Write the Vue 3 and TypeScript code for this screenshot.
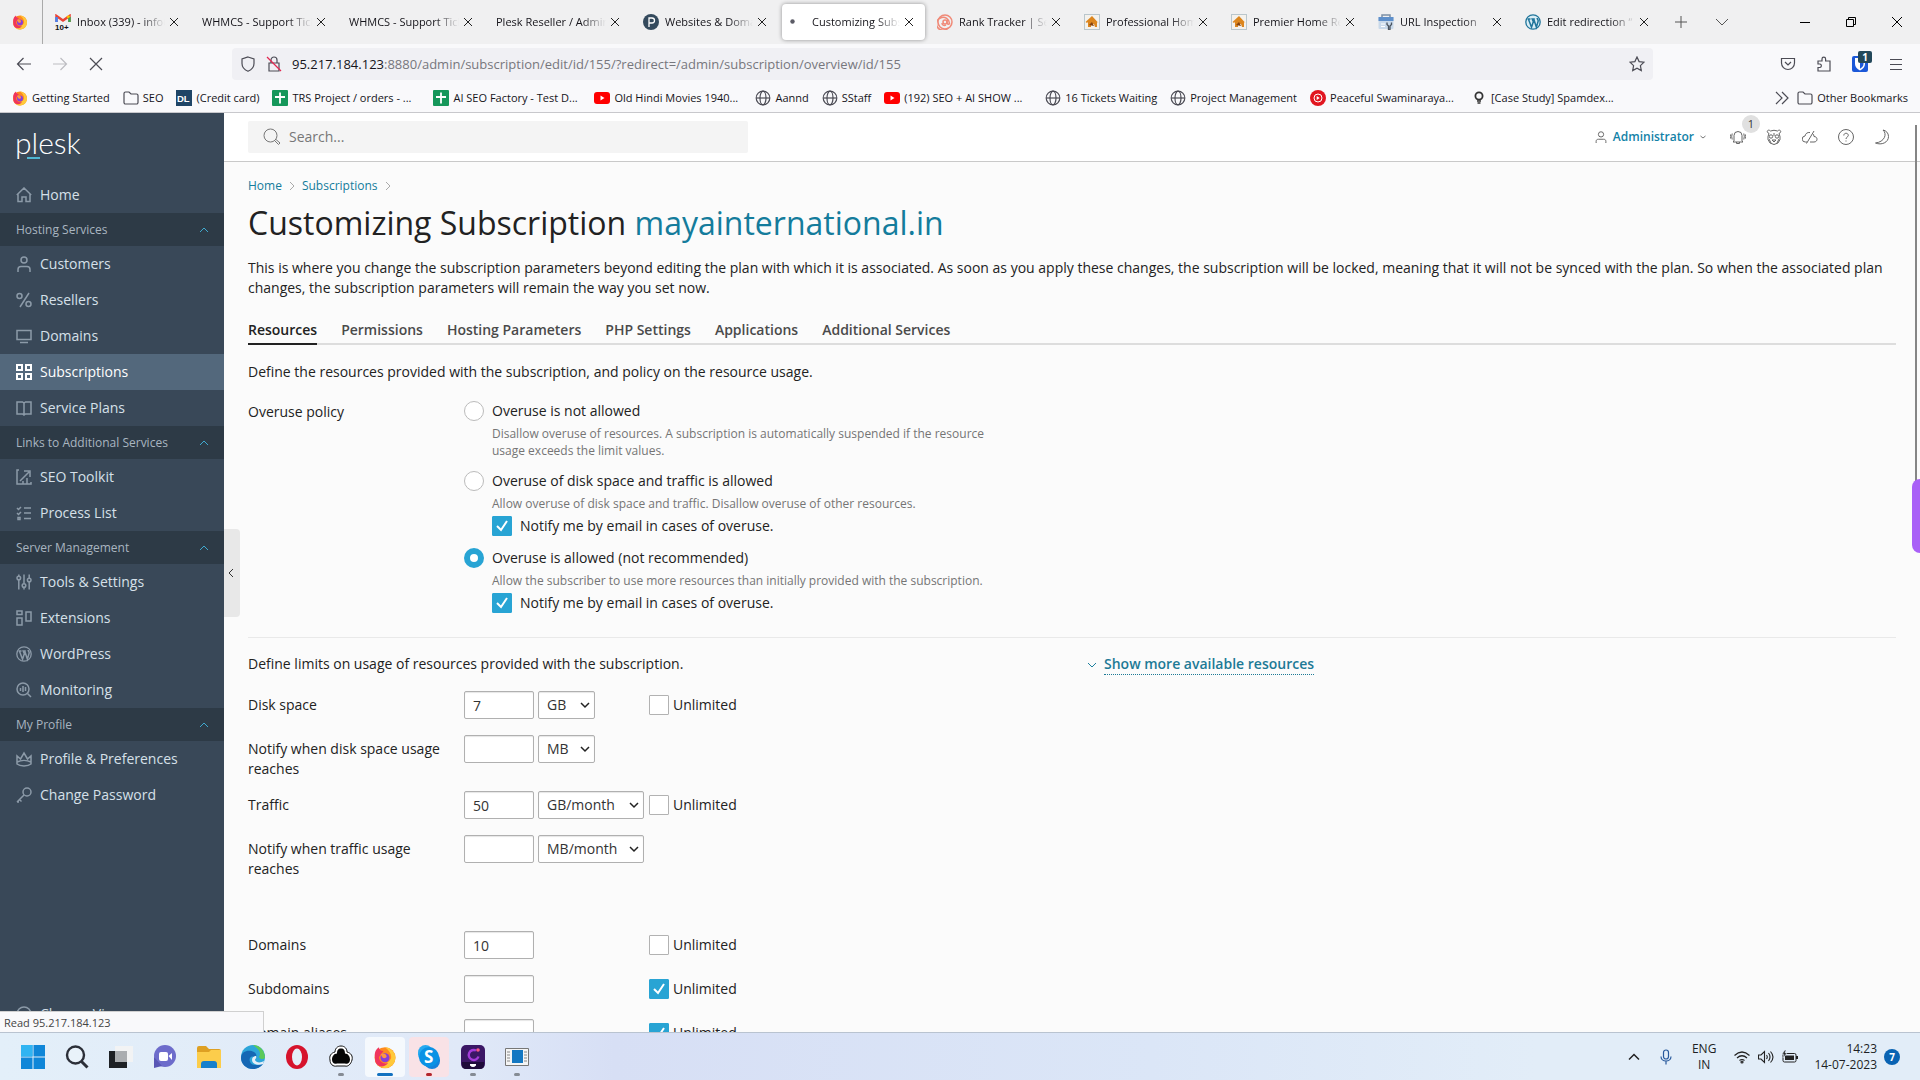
<script setup lang="ts">
import { ref } from 'vue'

interface BrowserTab { title: string; icon?: string; active?: boolean }
interface Bookmark { title: string; icon: string }
interface NavItem { label: string; icon: string; active?: boolean }
interface NavGroup { title?: string; items: NavItem[] }
interface Limit {
  id: string
  label: string
  value: string
  units?: string[]
  wide?: boolean
  unlimited?: boolean
  gapAfter?: boolean
}

const firefox = '<circle cx="8" cy="8.5" r="7" fill="#ff8a1e"/><path d="M8 1.5c3 0 7 3 7 7a7 7 0 0 1-13.500 2.500C5 14 10 13 12 9c.5-3-1-5-4-7.500z" fill="#ffc93a"/><path d="M1.200 7C1 4 3 2 4 1.500 4 3 5 4 7 4L4 8c0 3 3 5 6 4-2 3-7 3.500-8.500-1z" fill="#f0355c"/><circle cx="8" cy="8.500" r="3" fill="#8a3fd8"/><path d="M5 6c2-1 4 0 4 1.500S7 9 6.500 8.500z" fill="#ff9640"/>'
const globe = '<g fill="none" stroke="#4c4c55" stroke-width="1.200"><circle cx="8" cy="8" r="6.800"/><ellipse cx="8" cy="8" rx="3" ry="6.800"/><path d="M1.500 8h13"/></g>'
const folder = '<path d="M1 3.500a1.500 1.500 0 0 1 1.500-1.500h3.500l2 2h5.500A1.500 1.500 0 0 1 15 5.500v7a1.500 1.500 0 0 1-1.500 1.500h-11A1.500 1.500 0 0 1 1 12.500z" fill="none" stroke="#4c4c55" stroke-width="1.200"/>'
const sheet = '<rect width="16" height="16" rx="1" fill="#15975a"/><path d="M8 2.500v11M3 7h10" stroke="#fff" stroke-width="1.800"/>'
const youtube = '<rect y="2" width="16" height="12" rx="3" fill="#f00"/><path d="M6.500 5.500v5l4-2.500z" fill="#fff"/>'
const house = '<rect x=".5" y=".5" width="15" height="15" fill="#f4f1ec" stroke="#b9c6cc"/><path d="M8 2 1.500 8l1.500 1 1-1v5h3v-3h3l1 3h2V8l1.500 1z" fill="#dc861e"/><path d="m5 11 3-3 2 4z" fill="#83420f"/>'
const wordpress = (c: string, w: string) => `<circle cx="8" cy="8" r="7.200" fill="${w}" stroke="${c}" stroke-width="1.300"/><path d="M2.500 5h3M3.500 5.200l3 8 1.800-5.500L7.200 5h2.600M8.800 5.200l2.600 8L13.200 7c0-1.500-1-1.500-1-3" fill="none" stroke="${c}" stroke-width="1.500"/>`

const icons: Record<string, string> = {
  firefox, globe, folder, sheet, youtube, house,
  gmail: '<path d="M1.500 9V2l6.500 4.500L14.500 2v6" fill="none" stroke="#ea4335" stroke-width="2.500"/><path d="M1.500 9V3" stroke="#4285f4" stroke-width="2.500"/><path d="M14.500 8V3" stroke="#34a853" stroke-width="2.500"/><path d="M12 3.500 14.500 2" stroke="#fbbc04" stroke-width="2.500"/><rect y="8" width="16" height="8" fill="#f0f0f1"/><text x="0" y="15.500" font-family="Liberation Sans,sans-serif" font-size="8" font-weight="700" fill="#111">10+</text>',
  plesk: '<circle cx="8" cy="8" r="8" fill="#344a5d"/><path d="M6 13V4h3a2.500 2.500 0 0 1 0 5H6" fill="none" stroke="#fff" stroke-width="1.300"/>',
  dot: '<circle cx="2.500" cy="7.500" r="2.200" fill="#5b5b66"/>',
  rank: '<g fill="none" stroke="#f08a78" stroke-width="1.500"><circle cx="8" cy="8" r="7"/><circle cx="8" cy="8" r="2"/><path d="M11 14a6.500 6.500 0 1 1 1.500-4.500c-1 1.500-2.500.5-2.500-1V6M5 9c0 2 2 3 4 2"/></g>',
  console: '<path d="M4 3V1h8v2" fill="none" stroke="#7b8fa5" stroke-width="1.500"/><rect x=".5" y="3" width="15" height="12" rx="1" fill="#c9d9ea"/><rect x=".5" y="3" width="15" height="4" fill="#5f90cb"/><path d="M3 10h4M3 12.500h4" stroke="#fff"/><path d="M9 8.500v2l1.500 1.500v4h1.500v-4l1.500-1.500v-2" fill="none" stroke="#4b5560" stroke-width="1.300"/>',
  wordpressTab: wordpress('#21759b', '#d9edf5'),
  dl: '<rect width="16" height="16" fill="#1f4566"/><text x="1" y="11.500" font-family="Liberation Sans,sans-serif" font-size="9.500" font-weight="700" fill="#fff">DL</text>',
  music: '<circle cx="8" cy="8" r="8" fill="#e11620"/><circle cx="8" cy="8" r="4" fill="none" stroke="#fff"/><path d="M6.700 6v4l3-2z" fill="#fff"/>',
  bulb: '<circle cx="8" cy="6" r="3.600" fill="none" stroke="#333" stroke-width="1.800"/><path d="M6 11h4M6.500 13h3" stroke="#333" stroke-width="1.500"/>',
  home: '<path d="M.8 8 8 1l7.200 7M2 7v7.500h4V10h4v4.500h4V7"/>',
  user: '<circle cx="8" cy="4" r="3"/><path d="M2 16v-2.500c0-2 1-3 3-3h6c2 0 3 1 3 3V16"/>',
  percent: '<circle cx="3.500" cy="4" r="2.500"/><circle cx="12.500" cy="12" r="2.500"/><path d="M13 1 4 15"/>',
  monitor: '<path d="M1 2.500h14v9H1zM4 14.500h8"/>',
  grid: '<path d="M1 1h5v5H1zM10 1h5v5h-5zM1 10h5v5H1zM10 10h5v5h-5z" stroke-width="2"/>',
  book: '<path d="M1 2h5.500L8 3l1.500-1H15v12H9.500L8 15l-1.500-1H1zM8 3v12"/>',
  seo: '<path d="M3 1H1v14h14v-2M4 12l9-9M8 2h6v6M7 15v-3M11 15V9"/>',
  process: '<path d="m1 3 1.500 1.500L5 2M1 8l1.500 1.500L5 7M8 3h7M8 8h7M8 13.500h7M2 12.500h2v2H2z"/>',
  sliders: '<circle cx="2.800" cy="4" r="1.800"/><circle cx="8" cy="11.500" r="1.800"/><circle cx="13.200" cy="6" r="1.800"/><path d="M2.800 6v9.500M8 .5v9M8 13.500v2M13.200.5V4M13.200 8v7.500M2.800.5V2"/>',
  extensions: '<path d="M1 1h5v3.500H1zM1 8h5v7H1zM10 2h5v9h-5z"/>',
  wordpress: wordpress('#8c9aa8', 'none'),
  monitoring: '<circle cx="7" cy="7" r="6"/><path d="m11.500 11.500 3.500 3.500M4.500 6v3M7 4v6M9.500 5v4"/>',
  crown: '<path d="M1 5v8c3 2.500 11 2.500 14 0V5l-3.500 3L8 2 4.500 8zM1 11c4-2 10-2 14 0"/>',
  key: '<circle cx="11" cy="5" r="4"/><path d="m8 8-7 7M3.500 12.500l2 2M1 15h2"/>',
  view: '<circle cx="8" cy="8" r="7"/><path d="M5 8h6"/>',
}

const tabs: BrowserTab[] = [
  { title: 'Inbox (339) - info@', icon: 'gmail' },
  { title: 'WHMCS - Support Tickets' },
  { title: 'WHMCS - Support Tickets' },
  { title: 'Plesk Reseller / Admin' },
  { title: 'Websites & Domains', icon: 'plesk' },
  { title: 'Customizing Subscription', icon: 'dot', active: true },
  { title: 'Rank Tracker | Search', icon: 'rank' },
  { title: 'Professional Home', icon: 'house' },
  { title: 'Premier Home Repair', icon: 'house' },
  { title: 'URL Inspection', icon: 'console' },
  { title: 'Edit redirection “', icon: 'wordpressTab' },
]

const bookmarks: Bookmark[] = [
  { title: 'Getting Started', icon: 'firefox' },
  { title: 'SEO', icon: 'folder' },
  { title: '(Credit card)', icon: 'dl' },
  { title: 'TRS Project / orders - ...', icon: 'sheet' },
  { title: 'AI SEO Factory - Test D...', icon: 'sheet' },
  { title: 'Old Hindi Movies 1940...', icon: 'youtube' },
  { title: 'Aannd', icon: 'globe' },
  { title: 'SStaff', icon: 'globe' },
  { title: '(192) SEO + AI SHOW ...', icon: 'youtube' },
  { title: '16 Tickets Waiting', icon: 'globe' },
  { title: 'Project Management', icon: 'globe' },
  { title: 'Peaceful Swaminaraya...', icon: 'music' },
  { title: '[Case Study] Spamdex...', icon: 'bulb' },
]

const nav: NavGroup[] = [
  { items: [{ label: 'Home', icon: 'home' }] },
  {
    title: 'Hosting Services',
    items: [
      { label: 'Customers', icon: 'user' },
      { label: 'Resellers', icon: 'percent' },
      { label: 'Domains', icon: 'monitor' },
      { label: 'Subscriptions', icon: 'grid', active: true },
      { label: 'Service Plans', icon: 'book' },
    ],
  },
  {
    title: 'Links to Additional Services',
    items: [
      { label: 'SEO Toolkit', icon: 'seo' },
      { label: 'Process List', icon: 'process' },
    ],
  },
  {
    title: 'Server Management',
    items: [
      { label: 'Tools & Settings', icon: 'sliders' },
      { label: 'Extensions', icon: 'extensions' },
      { label: 'WordPress', icon: 'wordpress' },
      { label: 'Monitoring', icon: 'monitoring' },
    ],
  },
  {
    title: 'My Profile',
    items: [
      { label: 'Profile & Preferences', icon: 'crown' },
      { label: 'Change Password', icon: 'key' },
    ],
  },
]

const sections = ['Resources', 'Permissions', 'Hosting Parameters', 'PHP Settings', 'Applications', 'Additional Services']

const policy = ref('allowed')
const notifyTraffic = ref(true)
const notifyAll = ref(true)

const limits = ref<Limit[]>([
  { id: 'disk', label: 'Disk space', value: '7', units: ['GB', 'MB'], unlimited: false },
  { id: 'disk-notify', label: 'Notify when disk space usage reaches', value: '', units: ['MB', 'GB'] },
  { id: 'traffic', label: 'Traffic', value: '50', units: ['GB/month', 'MB/month'], wide: true, unlimited: false },
  { id: 'traffic-notify', label: 'Notify when traffic usage reaches', value: '', units: ['MB/month', 'GB/month'], wide: true, gapAfter: true },
  { id: 'domains', label: 'Domains', value: '10', unlimited: false },
  { id: 'subdomains', label: 'Subdomains', value: '', unlimited: true },
  { id: 'aliases', label: 'Domain aliases', value: '', unlimited: true },
])

const apps: { name: string; state?: string; art: string }[] = [
  { name: 'Start', art: '<path d="M0 0h11.500v11.500H0zM12.500 0H24v11.500H12.500zM0 12.500h11.500V24H0zM12.500 12.500H24V24H12.500z" fill="#0f86d8"/><path d="M0 0h11.500v11.500H0z" fill="#30b4f2"/>' },
  { name: 'Search', art: '<circle cx="10.500" cy="10" r="8.500" fill="#e9f2fa" stroke="#2b2f38" stroke-width="2.400"/><path d="m16.500 16.500 6 6" stroke="#2b2f38" stroke-width="3"/>' },
  { name: 'Task view', art: '<path d="M0 6h18v17H0z" fill="#1e2125"/><path d="M6 1h18v16H6z" fill="#f2f3f4"/><path d="M6 6h12v11H6z" fill="#aaadb0"/>' },
  { name: 'Chat', art: '<circle cx="12" cy="11" r="11" fill="#6d6ccb"/><path d="M1 12v11l8-2z" fill="#5856b5"/><rect x="6" y="7" width="9" height="9" rx="2" fill="#fff"/><path d="m15.500 11 3.500-3v7z" fill="#fff"/>' },
  { name: 'Explorer', art: '<path d="M0 3q0-2 2-2h7l3 3h10q2 0 2 2v16H0z" fill="#dea023"/><path d="M0 7h12l2-2h10v18H0z" fill="#fccd4b"/><path d="M4 23v-4q0-3 3-3h10q3 0 3 3v4z" fill="#1780cc"/>' },
  { name: 'Edge', art: '<circle cx="12" cy="12" r="12" fill="#2da5d9"/><path d="M24 13c0-7-5-13-12-13 5 4 9 7 6 12 1 2 4 3 6 1z" fill="#5cc958"/><path d="M0 13C0 6 8 4 13 7c3 2 3 5 1 6-1-1-2-2-4-1-3 2-1 8 4 8 3 0 5 0 8-1-3 4-7 5-10 5C5 24 0 19 0 13z" fill="#1567b4"/><path d="M15 11c1 2-1 3-1 4 1 3 6 3 9 1l-1 3c-5 2-11 0-11-4 0-3 2-4 4-4z" fill="#e5eef8"/>' },
  { name: 'Opera', art: '<ellipse cx="12" cy="12" rx="11" ry="12" fill="#d6132c"/><ellipse cx="12" cy="12" rx="5" ry="8.500" fill="#e4eef9"/>' },
  { name: 'Cloud', state: 'idle', art: '<path d="M12 1c4 0 6 3 6 6 4 1 6 4 5 8-1 4-4 7-7 6H8c-4 1-7-2-7-6-1-4 1-7 5-8 0-3 2-6 6-6z" fill="#fff" stroke="#111"/><path d="M12 3.500c3 0 4 2 4 5 3 0 5 3 5 6s-2 5-5 4H8c-3 1-5-1-5-4s2-6 5-6c0-3 1-5 4-5z" fill="#050505"/>' },
  { name: 'Firefox', state: 'current', art: `<g transform="scale(1.500)">${firefox}</g>` },
  { name: 'Skype', state: 'alert', art: '<rect x="1" y="0" width="15" height="17" rx="7.500" fill="#27aaf0"/><rect x="7" y="7" width="16" height="17" rx="8" fill="#1682db"/><circle cx="12" cy="12" r="10" fill="#0b92e5"/><text x="7" y="18" font-family="Open Sans,sans-serif" font-size="17" font-weight="700" fill="#fff">S</text>' },
  { name: 'Clipchamp', state: 'idle', art: '<rect width="24" height="24" rx="5" fill="#3b1765"/><path d="M15 5.500a5 5 0 1 0 2.500 6" fill="none" stroke="#a43bd9" stroke-width="2.400"/><circle cx="17" cy="5" r="1.800" fill="#f45986"/><path d="M1 17h22v3q0 4-4 4H5q-4 0-4-4z" fill="#1f0b3a"/><path d="M9 19h6v1.500q-3 3-6 0z" fill="#fff"/>' },
  { name: 'Recorder', state: 'idle', art: '<path d="M.5 3.500h23v17H.5z" fill="#f5f5f5" stroke="#777"/><path d="M7 5h11v13H7z" fill="#1578c2"/><path d="M2 7h3M2 10h3M2 13h3M2 16h3M19 7h3M19 10h3M19 13h3M19 16h3" stroke="#888"/>' },
]
</script>

<template>
  <div class="desktop">
    <header class="browser">
      <div class="tabstrip">
        <div class="pinned"><svg class="i16" viewBox="0 0 16 16" v-html="icons.firefox" /></div>
        <div class="tabs">
          <div v-for="(tab, i) in tabs" :key="i" class="tab" :class="{ active: tab.active }">
            <svg v-if="tab.icon" class="i16" viewBox="0 0 16 16" v-html="icons[tab.icon]" />
            <span class="tab-title">{{ tab.title }}</span>
            <button class="bare" aria-label="Close tab">
              <svg class="i10" viewBox="0 0 10 10"><path d="m1 1 8 8M9 1 1 9" stroke="#222" /></svg>
            </button>
          </div>
        </div>
        <button class="bare strip-btn" aria-label="New tab"><svg width="14" height="14" viewBox="0 0 14 14"><path d="M7 1v12M1 7h12" stroke="#555" /></svg></button>
        <button class="bare strip-btn" aria-label="List all tabs"><svg width="14" height="14" viewBox="0 0 14 14"><path d="m1 4 6 6 6-6" fill="none" stroke="#555" /></svg></button>
        <div class="window-controls">
          <button class="bare" aria-label="Minimize"><svg width="10" height="10" viewBox="0 0 10 10"><path d="M0 5.500h10" stroke="#000" /></svg></button>
          <button class="bare" aria-label="Restore"><svg width="10" height="10" viewBox="0 0 10 10"><path d="M.5 2.500h7v7h-7zM2.500 2.500v-2h7v7h-2" fill="none" stroke="#000" /></svg></button>
          <button class="bare" aria-label="Close"><svg width="10" height="10" viewBox="0 0 10 10"><path d="m0 0 10 10M10 0 0 10" stroke="#000" /></svg></button>
        </div>
      </div>

      <div class="toolbar">
        <div class="history">
          <button class="bare" aria-label="Back"><svg class="i16" viewBox="0 0 16 16"><path d="M15 8H1.500M7.500 2l-6 6 6 6" fill="none" stroke="#4c4c55" stroke-width="1.200" /></svg></button>
          <button class="bare" aria-label="Forward"><svg class="i16" viewBox="0 0 16 16"><path d="M1 8h13.500M8.500 2l6 6-6 6" fill="none" stroke="#bdbdc2" stroke-width="1.200" /></svg></button>
          <button class="bare" aria-label="Stop"><svg class="i16" viewBox="0 0 16 16"><path d="m2 2 12 12M14 2 2 14" stroke="#4c4c55" stroke-width="1.200" /></svg></button>
        </div>
        <div class="urlbar">
          <svg class="i16" viewBox="0 0 16 16"><path d="M8 1 14 3v4.500c0 4-3 6.500-6 7.800-3-1.300-6-3.800-6-7.800V3z" fill="none" stroke="#4c4c55" stroke-width="1.200" /></svg>
          <svg class="i16" viewBox="0 0 16 16"><path d="M3 7h10v8H3zM5 7V4a3 3 0 0 1 6 0v3" fill="none" stroke="#4c4c55" stroke-width="1.200" /><path d="m1 1 14 14" stroke="#e22850" stroke-width="1.300" /></svg>
          <span class="url"><b>95.217.184.123</b>:8880/admin/subscription/edit/id/155/?redirect=/admin/subscription/overview/id/155</span>
          <svg class="i16" viewBox="0 0 16 16"><path d="m8 1 2.100 4.600 4.900.6-3.600 3.400.9 5L8 12.200l-4.300 2.400.9-5L1 6.200l4.900-.6z" fill="none" stroke="#4c4c55" stroke-width="1.200" /></svg>
        </div>
        <div class="extensions">
          <button class="bare" aria-label="Pocket"><svg class="i16" viewBox="0 0 16 16"><path d="M1.500 2.500h13V7a6.500 6.500 0 0 1-13 0zM5 6l3 3 3-3" fill="none" stroke="#4c4c55" stroke-width="1.200" /></svg></button>
          <button class="bare" aria-label="Extensions"><svg class="i16" viewBox="0 0 16 16"><path d="M2 5h4V3a1.800 1.800 0 0 1 3.600 0v2H14v10H2v-3.500h2a1.800 1.800 0 0 0 0-3.500H2z" fill="none" stroke="#4c4c55" stroke-width="1.200" /></svg></button>
          <button class="bare vault" aria-label="Password manager">
            <svg class="i16" viewBox="0 0 16 16"><rect width="16" height="16" rx="2" fill="#1b58d8" /><path d="M3 2h10v6c0 3-2 5-5 6.500C5 13 3 11 3 8z" fill="#fff" /><path d="M8 3.500h3.500V8c0 2-1.500 3.500-3.500 4.700z" fill="#1b58d8" /></svg>
            <span class="vault-count">1</span>
          </button>
          <button class="bare" aria-label="Menu"><svg class="i16" viewBox="0 0 16 16"><path d="M2 3.500h12M2 8.500h12M2 13.500h12" stroke="#4c4c55" stroke-width="1.200" /></svg></button>
        </div>
      </div>

      <nav class="bookmarks" aria-label="Bookmarks">
        <a v-for="b in bookmarks" :key="b.title" href="#" :class="{ long: b.title.endsWith('...') }"><svg class="i16" viewBox="0 0 16 16" v-html="icons[b.icon]" />{{ b.title }}</a>
        <span class="bookmarks-end">
          <svg class="i14" viewBox="0 0 14 14"><path d="m1 1 6 6-6 6M7 1l6 6-6 6" fill="none" stroke="#4c4c55" stroke-width="1.200" /></svg>
          <a href="#"><svg class="i16" viewBox="0 0 16 16" v-html="icons.folder" />Other Bookmarks</a>
        </span>
      </nav>
    </header>

    <div class="page">
      <aside class="sidebar">
        <a class="logo" href="#">plesk</a>
        <nav>
          <template v-for="(group, g) in nav" :key="g">
            <button v-if="group.title" class="group-title">
              {{ group.title }}
              <svg width="10" height="10" viewBox="0 0 10 10"><path d="m1 7 4-4 4 4" fill="none" stroke="#3fa9cf" /></svg>
            </button>
            <a v-for="item in group.items" :key="item.label" href="#" class="nav-item" :class="{ active: item.active }">
              <svg class="i16 line" viewBox="0 0 16 16" v-html="icons[item.icon]" />{{ item.label }}
            </a>
          </template>
        </nav>
        <a href="#" class="nav-item change-view"><svg class="i16 line" viewBox="0 0 16 16" v-html="icons.view" />Change View</a>
      </aside>

      <button class="collapse" aria-label="Collapse sidebar"><svg width="10" height="10" viewBox="0 0 10 10"><path d="M7 1 3 5l4 4" fill="none" stroke="#333" /></svg></button>

      <div class="content">
        <div class="topbar">
          <label class="search">
            <svg width="18" height="18" viewBox="0 0 18 18" fill="none" stroke="#777"><circle cx="7.500" cy="7.500" r="6.500" /><path d="m11.500 12.500 4 4 1.500-1.500-4-3.500" /></svg>
            <input type="text" placeholder="Search..." aria-label="Search" />
          </label>
          <div class="account">
            <button class="bare admin">
              <svg width="12" height="12" viewBox="0 0 16 16" fill="none" stroke="#666" stroke-width="1.300"><circle cx="8" cy="4.500" r="3.500" /><path d="M1.500 16v-2c0-2 1-3 3-3h7c2 0 3 1 3 3v2" /></svg>
              Administrator
              <svg width="6" height="6" viewBox="0 0 6 6"><path d="m.5 2 2.500 2L5.500 2" fill="none" stroke="#777" /></svg>
            </button>
            <button class="bare bell" aria-label="Notifications">
              <svg class="i16 thin" viewBox="0 0 16 16"><path d="M4 12V6.500a4 4 0 0 1 8 0V12l1 1H3zM6.500 13v1.500h3V13M2.200 4.500q-1 3 0 6M.5 5.500q-.5 2 0 4M13.800 4.500q1 3 0 6M15.500 5.500q.5 2 0 4" /></svg>
              <span class="bell-count">1</span>
            </button>
            <button class="bare" aria-label="Advisor"><svg class="i16 thin" viewBox="0 0 16 16"><path d="M3 4.500C-.5 3 2-.5 4.500 2q3.500-1.500 7 0C14 -.5 16.500 3 13 4.500q1.500 3 1 6-1 4.500-6 5-5-.5-6-5-.5-3 1-6z" /><circle cx="5" cy="7.500" r="1.700" /><circle cx="11" cy="7.500" r="1.700" /><path d="M6 11h4l-2 2zM3 10l2 4M13 10l-2 4M8 4v3" /></svg></button>
            <button class="bare" aria-label="Cloud"><svg class="i16 thin" viewBox="0 0 16 16"><path d="M5 13H3.500a3 3 0 0 1-.5-6Q4 3 8 3.500M10.500 4.500Q12 5.500 12 7.500c4 0 4 5.500 0 5.500H8M4.500 14.500 12 2" /></svg></button>
            <button class="bare" aria-label="Help"><svg class="i16 thin" viewBox="0 0 16 16"><circle cx="8" cy="8" r="7.500" /><path d="M5.800 6.500c0-3 4.500-3 4.500 0 0 1.500-2.300 1.500-2.300 3.500M8 11.500v1" /></svg></button>
            <button class="bare" aria-label="Dark mode"><svg class="i16 thin" viewBox="0 0 16 16"><path d="M9 1c4.500 4 1.500 12-7.500 13 6 2.500 13-.5 13-6.500C14.500 4 12 1.500 9 1z" /></svg></button>
          </div>
        </div>

        <main>
          <nav class="crumbs" aria-label="Breadcrumb">
            <a href="#">Home</a>
            <svg width="8" height="10" viewBox="0 0 8 10"><path d="m2 1 4 4-4 4" fill="none" stroke="#aaa" /></svg>
            <a href="#">Subscriptions</a>
            <svg width="8" height="10" viewBox="0 0 8 10"><path d="m2 1 4 4-4 4" fill="none" stroke="#aaa" /></svg>
          </nav>
          <h1>Customizing Subscription <a href="#">mayainternational.in</a></h1>
          <p class="intro">This is where you change the subscription parameters beyond editing the plan with which it is associated. As soon as you apply these changes, the subscription will be locked, meaning that it will not be synced with the plan. So when the associated plan changes, the subscription parameters will remain the way you set now.</p>

          <nav class="sections" aria-label="Sections">
            <a v-for="(s, i) in sections" :key="s" href="#" :class="{ active: i === 0 }">{{ s }}</a>
          </nav>

          <p class="lead">Define the resources provided with the subscription, and policy on the resource usage.</p>

          <fieldset class="policy" aria-labelledby="policy-label">
            <div id="policy-label" class="field-label">Overuse policy</div>
            <div class="options">
              <div class="option">
                <label class="choice"><input v-model="policy" type="radio" name="policy" value="none" />Overuse is not allowed</label>
                <p>Disallow overuse of resources. A subscription is automatically suspended if the resource usage exceeds the limit values.</p>
              </div>
              <div class="option">
                <label class="choice"><input v-model="policy" type="radio" name="policy" value="disk" />Overuse of disk space and traffic is allowed</label>
                <p>Allow overuse of disk space and traffic. Disallow overuse of other resources.</p>
                <label class="choice nested"><span class="check"><input v-model="notifyTraffic" type="checkbox" /><svg viewBox="0 0 20 20"><path d="m5 10 4 4 6-9" /></svg></span>Notify me by email in cases of overuse.</label>
              </div>
              <div class="option">
                <label class="choice"><input v-model="policy" type="radio" name="policy" value="allowed" />Overuse is allowed (not recommended)</label>
                <p>Allow the subscriber to use more resources than initially provided with the subscription.</p>
                <label class="choice nested"><span class="check"><input v-model="notifyAll" type="checkbox" /><svg viewBox="0 0 20 20"><path d="m5 10 4 4 6-9" /></svg></span>Notify me by email in cases of overuse.</label>
              </div>
            </div>
          </fieldset>

          <div class="limits-head">
            <p>Define limits on usage of resources provided with the subscription.</p>
            <div class="more">
              <svg width="8" height="8" viewBox="0 0 8 8"><path d="m0 2 4 4 4-4" fill="none" stroke="#1d7f9e" /></svg>
              <a href="#">Show more available resources</a>
            </div>
          </div>

          <div v-for="l in limits" :key="l.id" class="limit" :class="{ last: l.gapAfter }">
            <label class="field-label" :for="l.id">{{ l.label }}</label>
            <div class="amount">
              <input :id="l.id" v-model="l.value" type="text" />
              <span v-if="l.units" class="unit" :class="{ wide: l.wide }">
                <select :aria-label="l.label + ' unit'"><option v-for="u in l.units" :key="u">{{ u }}</option></select>
                <svg width="10" height="10" viewBox="0 0 10 10"><path d="m1 3 4 4 4-4" fill="none" stroke="#222" stroke-width="1.500" /></svg>
              </span>
            </div>
            <label v-if="l.unlimited !== undefined" class="unlimited"><span class="check"><input v-model="l.unlimited" type="checkbox" /><svg viewBox="0 0 20 20"><path d="m5 10 4 4 6-9" /></svg></span>Unlimited</label>
          </div>
        </main>
      </div>

      <div class="scroll-thumb"></div>
      <div class="side-tab"></div>
      <div class="status">Read 95.217.184.123</div>
    </div>

    <footer class="taskbar">
      <div class="apps">
        <button v-for="app in apps" :key="app.name" class="bare app" :class="app.state" :aria-label="app.name">
          <svg width="24" height="24" viewBox="0 0 24 24" v-html="app.art" />
        </button>
      </div>
      <div class="tray">
        <svg width="12" height="12" viewBox="0 0 12 12"><path d="m1 8.500 5-5 5 5" fill="none" stroke="#222" stroke-width="1.500" /></svg>
        <svg class="mic" width="12" height="16" viewBox="0 0 12 16" fill="none" stroke="#27589c" stroke-width="1.200"><rect x="3.500" y="1" width="5" height="9" rx="2.500" /><path d="M1 7.500c0 6 10 6 10 0M6 12v3.500" /></svg>
        <span class="lang">ENG<br />IN</span>
        <span class="signals">
          <svg class="i16" viewBox="0 0 16 16" fill="none" stroke="#222" stroke-width="1.200"><path d="M.5 6.500q7.500-7 15 0M3 9q5-4.500 10 0M5.500 11.500q2.500-2 5 0" /><circle cx="8" cy="13" r="1" /></svg>
          <svg class="i16" viewBox="0 0 16 16" fill="none" stroke="#222" stroke-width="1.100"><path d="M.5 6v4H3l3.500 3.500v-11L3 6zM8.500 6q1.500 2 0 4M10.500 4q3 4 0 8M12.500 2.500q5 5.500 0 11" /></svg>
          <svg class="i16" viewBox="0 0 16 16"><rect x="1" y="4.500" width="13" height="8.500" rx="1.500" fill="none" stroke="#222" /><path d="M3 6.500h9v4.500H3zM14 7h2v3h-2z" fill="#222" /><path d="m3 1-3 4h2l-1 4 4-5H3l1-3z" fill="#222" stroke="#e2edf8" stroke-width=".5" /></svg>
        </span>
        <span class="clock">14:23<br />14-07-2023</span>
        <span class="alerts">7</span>
      </div>
    </footer>
  </div>
</template>

<style>
html, body { margin: 0; }
</style>

<style scoped>
.desktop {
  display: flex;
  flex-direction: column;
  height: 100vh;
  overflow: hidden;
  font: 14px/20px "Open Sans", "Noto Sans", sans-serif;
  color: #222;
  background: #fbfbfb;
}
.desktop *, .desktop *::before, .desktop *::after { box-sizing: border-box; }
a { text-decoration: none; }
.bare {
  display: inline-flex;
  align-items: center;
  justify-content: center;
  padding: 0;
  border: 0;
  background: none;
  font: inherit;
  color: inherit;
}
svg { flex: none; }
.i10 { width: 10px; height: 10px; }
.i14 { width: 14px; height: 14px; }
.i16 { width: 16px; height: 16px; }
.thin { fill: none; stroke: #666; stroke-width: 1; }

.browser { background: #f9f9fb; border-bottom: 1px solid #c8c8cc; color: #15141a; font-size: 11px; }
.tabstrip { display: flex; align-items: center; height: 44px; background: #f0f0f1; }
.pinned { display: flex; align-items: center; align-self: stretch; width: 43px; margin-right: 4px; padding-left: 12px; border-right: 1px solid #aaa; }
.tabs { display: flex; gap: 4px; }
.tab { display: flex; align-items: center; width: 143px; height: 36px; padding: 0 11px 0 8px; border-radius: 4px; }
.tab.active { background: #fff; box-shadow: 0 0 4px #00000066; }
.tab > .i16 { margin-right: 6px; }
.tab-title {
  flex: 1;
  min-width: 0;
  overflow: hidden;
  white-space: nowrap;
  margin-right: 4px;
  mask-image: linear-gradient(to left, transparent, #000 24px);
}
.strip-btn { width: 41px; height: 36px; }
.window-controls { display: flex; margin-left: auto; align-self: stretch; }
.window-controls button { width: 46px; }

.toolbar { display: flex; align-items: center; height: 40px; }
.history { display: flex; gap: 20px; padding-left: 16px; width: 232px; }
.urlbar { display: flex; align-items: center; gap: 10px; flex: 1; height: 32px; padding: 0 8px; background: #f0f0f4; border-radius: 4px; }
.url { flex: 1; font-size: 13px; color: #77777d; }
.url b { font-weight: 400; color: #15141a; }
.extensions { display: flex; gap: 20px; justify-content: flex-end; width: 267px; padding-right: 16px; }
.vault { position: relative; }
.vault-count { position: absolute; top: -5px; right: -4px; width: 14px; background: #23485a; color: #fff; font: 700 10px/12px "Open Sans", sans-serif; border-radius: 2px; }

.bookmarks { display: flex; align-items: center; gap: 13px; height: 28px; padding: 0 12px; white-space: nowrap; }
.bookmarks a { display: flex; align-items: center; gap: 4px; color: inherit; }
.bookmarks .long { min-width: 148px; }
.bookmarks-end { display: flex; align-items: center; gap: 8px; margin-left: auto; }

.page { position: relative; display: flex; flex: 1; min-height: 0; overflow: hidden; }
.sidebar { display: flex; flex-direction: column; flex: none; width: 224px; background: #394858; }
.logo { position: relative; height: 64px; padding: 9px 15px; font: 300 30px/40px Lato, "Open Sans", sans-serif; color: #fff; }
.logo::after { content: ""; position: absolute; left: 27px; top: 44px; width: 13px; height: 2px; background: #4fb6d3; }
.nav-item { display: flex; align-items: center; gap: 8px; height: 36px; padding-left: 16px; color: #d6e0e9; }
.nav-item.active { background: #53687c; color: #fff; }
.line { fill: none; stroke: #8c9aa8; stroke-width: 1.5; }
.active .line { stroke: #fff; }
.group-title {
  display: flex;
  align-items: center;
  justify-content: space-between;
  width: 100%;
  height: 33px;
  padding: 0 15px 0 16px;
  border: 0;
  background: #2d3a46;
  color: #a9b5c0;
  font: 12px/16px "Open Sans", sans-serif;
}
.change-view { margin-top: auto; }
.collapse { position: absolute; left: 224px; top: 416px; width: 16px; height: 88px; padding: 0 2px 0 0; border: 0; border-radius: 0 4px 4px 0; background: #e8e8e8; }
.content { display: flex; flex-direction: column; flex: 1; min-width: 0; }

.topbar { display: flex; align-items: center; justify-content: space-between; flex: none; height: 49px; padding: 0 30px 0 24px; background: #fff; border-bottom: 1px solid #c9c9c9; }
.search { display: flex; align-items: center; gap: 8px; width: 500px; height: 32px; padding: 0 15px; background: #f4f4f4; border-radius: 2px; }
.search input { flex: 1; border: 0; padding: 0; background: none; font: inherit; }
.search input::placeholder { color: #777; opacity: 1; }
.account { display: flex; align-items: center; gap: 20px; }
.admin { gap: 6px; margin-right: 4px; font-size: 12px; font-weight: 600; color: #1282a7; }
.bell { position: relative; }
.bell-count { position: absolute; left: 12px; top: -14px; width: 18px; height: 18px; border-radius: 9px; background: #e0e0e0; color: #333; font-size: 11px; line-height: 18px; }

main { padding: 16px 24px 0; }
.crumbs { display: flex; align-items: center; gap: 6px; height: 16px; font-size: 12px; line-height: 16px; }
.crumbs a, h1 a { color: #147c9c; }
h1 { margin: 8px 0 14px; font-size: 32px; line-height: 42px; font-weight: 400; }
p { margin: 0; }
.sections { display: flex; gap: 24px; margin-top: 22px; border-bottom: 2px solid #ddd; font-weight: 600; }
.sections a { height: 25px; margin-bottom: -2px; color: #4a4a4a; }
.sections a.active { color: #222; border-bottom: 2px solid #222; }
.lead { margin-top: 17px; }

.policy { display: flex; margin: 19px 0 0; padding: 0 0 24px; border: 0; border-bottom: 1px solid #e9e9e9; }
.field-label { flex: none; width: 216px; padding-right: 16px; }
.policy .field-label { padding-top: 1px; }
.options { display: flex; flex-direction: column; gap: 12px; width: 540px; }
.option p { margin: 4px 0 4px 28px; font-size: 12px; line-height: 17px; color: #757575; }
.option:first-child p { margin-bottom: 0; }
.choice { display: flex; align-items: center; gap: 8px; }
.nested { margin-left: 28px; }
input[type="radio"] { appearance: none; width: 20px; height: 20px; margin: 0; border: 1px solid #bbb; border-radius: 50%; background: #fff; }
input[type="radio"]:checked { border: 6px solid #28a4d4; }
.check { position: relative; display: flex; width: 20px; height: 20px; }
.check input { appearance: none; width: 20px; height: 20px; margin: 0; border: 1px solid #b2b2b2; border-radius: 1px; background: #fff; }
.check input:checked { border-color: #28a4d4; background: #28a4d4; }
.check svg { position: absolute; inset: 0; fill: none; stroke: none; stroke-width: 2; }
.check input:checked + svg { stroke: #fff; }

.limits-head { display: flex; margin: 16px 0; }
.limits-head p { width: 840px; }
.more { display: flex; align-items: center; gap: 8px; }
.more a { color: #1d7a96; font-weight: 600; border-bottom: 1px dotted #1d7a96; }
.limit { display: flex; align-items: flex-start; min-height: 28px; margin-bottom: 16px; }
.limit .field-label { padding-top: 4px; margin-bottom: -4px; }
.limit.last { margin-bottom: 56px; }
.amount { display: flex; gap: 4px; width: 185px; height: 28px; }
.amount input, .unit select { height: 28px; border: 1px solid #b0b0b0; border-radius: 2px; background: #fff; font: inherit; color: #333; box-shadow: inset 0 1px 1px #0000001a; }
.amount input { width: 70px; padding: 0 8px; }
.unit { position: relative; width: 57px; }
.unit.wide { width: 106px; }
.unit select { appearance: none; width: 100%; padding: 0 8px; }
.unit svg { position: absolute; right: 5px; top: 9px; pointer-events: none; }
.unlimited { display: flex; align-items: center; gap: 4px; height: 28px; }

.scroll-thumb { position: absolute; right: 3px; top: 12px; width: 2px; height: 360px; background: #858585; }
.side-tab { position: absolute; right: 0; top: 366px; width: 8px; height: 74px; border-radius: 8px 0 0 8px; background: #a960f7; }
.status { position: absolute; left: 0; bottom: 0; width: 264px; height: 21px; padding-left: 4px; border: 1px solid #d0d0d0; border-width: 1px 1px 0 0; background: #f9f9fb; color: #444; font-size: 11px; line-height: 21px; }

.taskbar { display: flex; align-items: center; justify-content: space-between; flex: none; height: 48px; padding: 0 20px 0 13px; border-top: 1px solid #b9c3d0; background: linear-gradient(90deg, #e3eff9 0%, #e0e9f8 24%, #d7dff5 32%, #dbe6f7 60%, #e2edf8 80%); }
.apps { display: flex; gap: 4px; }
.app { position: relative; width: 40px; height: 40px; border-radius: 4px; }
.app.current { background: #f5f9fd; }
.app.alert { background: #f9e2e6; }
.app.idle::after, .app.current::after, .app.alert::after { content: ""; position: absolute; bottom: 1px; left: 17px; width: 6px; height: 3px; border-radius: 2px; background: #858b94; }
.app.current::after { left: 12px; width: 16px; background: #1271c0; }
.app.alert::after { background: #b3262d; }
.tray { display: flex; align-items: center; font-size: 12px; line-height: 16px; color: #1d1f24; }
.mic { margin-left: 20px; }
.lang { margin-left: 20px; text-align: center; }
.signals { display: flex; gap: 8px; margin-left: 18px; }
.clock { margin-left: 16px; text-align: right; }
.alerts { width: 16px; height: 16px; margin-left: 7px; border-radius: 8px; background: #0963b3; color: #fff; font-weight: 700; font-size: 10px; text-align: center; }
</style>
